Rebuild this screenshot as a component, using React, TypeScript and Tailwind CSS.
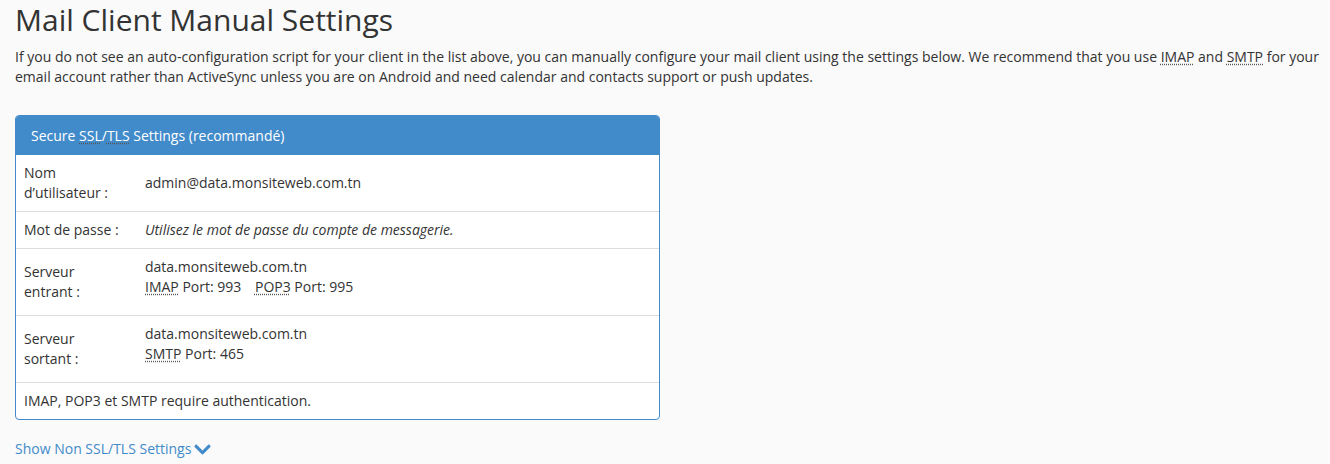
import { FaChevronDown } from 'react-icons/fa'

function Abbr({ title, children }: { title: string; children: React.ReactNode }) {
  return (
    <abbr title={title} className="underline decoration-dotted decoration-[#555] underline-offset-2">
      {children}
    </abbr>
  )
}

export default function App() {
  return (
    <div className="min-h-[464px] bg-[#fafafa] pl-[15px] pr-[10px] pt-[3px] text-[14px] leading-[20px] text-[#333] font-['Open_Sans',sans-serif]">
      {/* Title */}
      <h1 className="text-[30px] leading-[33px] text-[#333] font-normal">Mail Client Manual Settings</h1>
      <p className="mt-[11px]">
        If you do not see an auto-configuration script for your client in the list above, you can manually configure
        your mail client using the settings below. We recommend that you use <Abbr title="Internet Message Access Protocol">IMAP</Abbr> and{' '}
        <Abbr title="Simple Mail Transfer Protocol">SMTP</Abbr> for your email account rather than ActiveSync unless you
        are on Android and need calendar and contacts support or push updates.
      </p>

      {/* Settings panel */}
      <div className="mt-[28px] w-[645px] rounded-[4px] border border-[#428bca] bg-white">
        <div className="bg-[#428bca] px-[15px] pt-[10px] pb-[9px] text-white rounded-t-[3px]">
          Secure <Abbr title="Secure Sockets Layer">SSL</Abbr>/<Abbr title="Transport Layer Security">TLS</Abbr> Settings (recommandé)
        </div>
        <table className="w-full border-collapse">
          <tbody>
            <tr>
              <td className="w-[121px] py-[8px] pl-[8px] pr-[17px] align-middle">Nom d’utilisateur :</td>
              <td className="p-[8px] align-middle">admin@data.monsiteweb.com.tn</td>
            </tr>
            <tr className="border-t border-[#ddd]">
              <td className="w-[121px] py-[8px] pl-[8px] pr-[17px] align-middle">Mot de passe :</td>
              <td className="p-[8px] align-middle italic">Utilisez le mot de passe du compte de messagerie.</td>
            </tr>
            <tr className="border-t border-[#ddd]">
              <td className="w-[121px] py-[8px] pl-[8px] pr-[17px] align-middle">Serveur entrant :</td>
              <td className="p-[8px] pb-[18px] align-top">
                <div>data.monsiteweb.com.tn</div>
                <div>
                  <span className="mr-[10px]">
                    <Abbr title="Internet Message Access Protocol">IMAP</Abbr> Port: 993
                  </span>{' '}
                  <span>
                    <Abbr title="Post Office Protocol 3">POP3</Abbr> Port: 995
                  </span>
                </div>
              </td>
            </tr>
            <tr className="border-t border-[#ddd]">
              <td className="w-[121px] py-[8px] pl-[8px] pr-[17px] align-middle">Serveur sortant :</td>
              <td className="p-[8px] pb-[18px] align-top">
                <div>data.monsiteweb.com.tn</div>
                <div>
                  <Abbr title="Simple Mail Transfer Protocol">SMTP</Abbr> Port: 465
                </div>
              </td>
            </tr>
            <tr className="border-t border-[#ddd]">
              <td colSpan={2} className="p-[8px]">
                IMAP, POP3 et SMTP require authentication.
              </td>
            </tr>
          </tbody>
        </table>
      </div>

      {/* Toggle link */}
      <a href="#" className="mt-[19px] inline-flex items-center gap-[3px] text-[#428bca]">
        Show Non SSL/TLS Settings
        <FaChevronDown className="h-[19px] w-[17px]" />
      </a>
    </div>
  )
}
